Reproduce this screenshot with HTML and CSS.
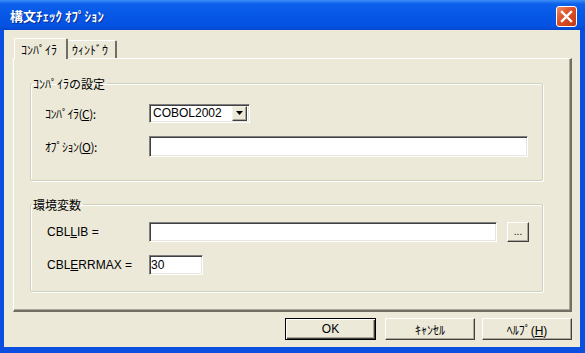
FILE: index.html
```html
<!DOCTYPE html>
<html lang="ja">
  <head>
    <meta charset="UTF-8" />
    <title>構文ﾁｪｯｸ ｵﾌﾟｼｮﾝ</title>
    <link rel="stylesheet" href="styles.css">
  </head>
  <body>
    <div class="window">
      <div class="titlebar">
        <span class="title">構文ﾁｪｯｸ ｵﾌﾟｼｮﾝ</span>
        <button class="close" aria-label="close">
          <svg width="13" height="13" viewBox="0 0 13 13">
            <path d="M2 2 L11 11 M11 2 L2 11" stroke="#fff" stroke-width="2.4" stroke-linecap="square" />
          </svg>
        </button>
      </div>

      <div class="client">
        <div class="tabs">
          <div class="tab active">ｺﾝﾊﾟｲﾗ</div>
          <div class="tab">ｳｨﾝﾄﾞｳ</div>
        </div>

        <div class="panel">
          <fieldset class="group group-compiler">
            <legend>ｺﾝﾊﾟｲﾗの設定</legend>
            <div class="row">
              <label>ｺﾝﾊﾟｲﾗ(<u>C</u>):</label>
              <div class="combo">
                <span class="combo-text">COBOL2002</span>
                <span class="combo-drop">
                  <svg width="7" height="4" viewBox="0 0 7 4"><path d="M0 0 H7 L3.5 4 Z" fill="#000" /></svg>
                </span>
              </div>
            </div>
            <div class="row">
              <label>ｵﾌﾟｼｮﾝ(<u>O</u>):</label>
              <div class="field field-option"></div>
            </div>
          </fieldset>

          <fieldset class="group group-env">
            <legend>環境変数</legend>
            <div class="row">
              <label class="latin">CBL<u>L</u>IB =</label>
              <div class="field field-lib"></div>
              <button class="btn btn-browse">...</button>
            </div>
            <div class="row">
              <label class="latin">CBL<u>E</u>RRMAX =</label>
              <div class="field field-max">30</div>
            </div>
          </fieldset>
        </div>

        <div class="buttons">
          <button class="btn btn-default">OK</button>
          <button class="btn">ｷｬﾝｾﾙ</button>
          <button class="btn">ﾍﾙﾌﾟ(<u>H</u>)</button>
        </div>
      </div>
    </div>
  </body>
</html>
```

FILE: styles.css
```css
* {
  box-sizing: border-box;
  margin: 0;
  padding: 0;
}

body {
  font-family: "Liberation Sans", "Noto Sans CJK JP", sans-serif;
  font-size: 12px;
  color: #000;
  background: #fff;
}

.window {
  width: 585px;
  height: 353px;
  display: flex;
  flex-direction: column;
  background: #0a4fe0;
  padding: 0 5px 6px 4px;
}

/* Title bar */
.titlebar {
  height: 30px;
  margin: 0 -5px 0 -4px;
  padding: 0 8px 0 10px;
  display: flex;
  align-items: center;
  justify-content: space-between;
  background: linear-gradient(
    #3d8ef6 0,
    #0b60ec 4px,
    #0757e6 16px,
    #0452e2 26px,
    #0347cf 30px
  );
}

.title {
  color: #fff;
  font-weight: bold;
  font-size: 13px;
  font-family: "Noto Sans CJK JP", sans-serif;
  text-shadow: 1px 1px 0 #0a2a8a;
}

.close {
  width: 21px;
  height: 21px;
  margin-top: 2px;
  border: 1px solid #fff;
  border-radius: 3px;
  background: linear-gradient(135deg, #ef8a62, #dc4f25 45%, #c23b16);
  display: flex;
  align-items: center;
  justify-content: center;
}

/* Client area */
.client {
  flex: 1;
  background: #ece9d8;
  padding: 8px 8px 0 9px;
  display: flex;
  flex-direction: column;
}

.tabs {
  display: flex;
  align-items: flex-end;
  height: 20px;
  padding-left: 1px;
}

.tab {
  height: 18px;
  padding: 0 4px;
  line-height: 17px;
  font-family: "Noto Sans CJK JP", sans-serif;
  border: 1px solid #fff;
  border-right: 2px solid #716f64;
  border-bottom: none;
  border-radius: 2px 2px 0 0;
  background: #ece9d8;
}

.tab.active {
  height: 21px;
  width: 54px;
  padding: 2px 6px 0 6px;
  margin-bottom: -1px;
  position: relative;
  z-index: 1;
  border-right: 2px solid #716f64;
}

.tab + .tab {
  width: 49px;
  border-left: none;
}

.panel {
  height: 254px;
  border: 1px solid #fff;
  border-right: 2px solid #716f64;
  border-bottom: 2px solid #716f64;
  box-shadow: inset -1px -1px 0 #aca899;
  padding: 18px 27px 0 16px;
}

/* Group boxes */
.group {
  border: 1px solid #d0d0bf;
  box-shadow: inset 1px 1px 0 #fff, 1px 1px 0 #fff;
  border-radius: 2px;
  padding: 13px 0 0 14px;
}

.group legend {
  margin-left: -13px;
  padding: 0 2px 0 1px;
  line-height: 13px;
  font-family: "Noto Sans CJK JP", sans-serif;
}

.group-compiler {
  height: 104px;
}

.group-env {
  margin-top: 17px;
  height: 94px;
  padding-top: 11px;
  padding-left: 16px;
}

.group-env legend {
  margin-left: -15px;
}

.row {
  display: flex;
  align-items: center;
  height: 20px;
  margin-top: 13px;
}

.row:first-of-type {
  margin-top: 0;
}

.group-env .row + .row {
  margin-top: 13px;
}

.row label {
  width: 104px;
  font-family: "Noto Sans CJK JP", sans-serif;
  letter-spacing: -0.5px;
}

.row label.latin {
  width: 102px;
  font-family: "Liberation Sans", sans-serif;
  letter-spacing: 0;
}

/* Fields */
.field,
.combo {
  height: 20px;
  background: #fff;
  border: 1px solid;
  border-color: #7f7f7f #fff #fff #7f7f7f;
  box-shadow: inset 1px 1px 0 #404040, inset -1px -1px 0 #e8e6dc;
  padding: 2px 3px;
  line-height: 15px;
}

.combo {
  width: 101px;
  height: 19px;
  display: flex;
  align-items: center;
  justify-content: space-between;
  padding: 2px 2px 2px 3px;
}

.combo-text {
  font-size: 12px;
}

.combo-drop {
  width: 15px;
  height: 15px;
  background: #ece9d8;
  border: 1px solid;
  border-color: #f4f3ee #404040 #404040 #f4f3ee;
  box-shadow: inset -1px -1px 0 #aca899;
  display: flex;
  align-items: center;
  justify-content: center;
}

.field-option {
  width: 379px;
  height: 21px;
}

.field-lib {
  width: 348px;
}

.field-max {
  width: 54px;
  padding-left: 1px;
}

/* Buttons */
.btn {
  font-family: "Liberation Sans", "Noto Sans CJK JP", sans-serif;
  font-size: 12px;
  color: #000;
  background: #ece9d8;
  border: 1px solid;
  border-color: #fff #404040 #404040 #fff;
  box-shadow: inset -1px -1px 0 #aca899;
  width: 90px;
  height: 22px;
}

.btn-browse {
  width: 22px;
  height: 20px;
  margin-left: 10px;
  font-size: 10px;
  line-height: 12px;
}

.btn-default {
  border: 1px solid #000;
  box-shadow: inset 1px 1px 0 #fff, inset -1px -1px 0 #404040, inset -2px -2px 0 #aca899;
  width: 91px;
}

.buttons {
  display: flex;
  justify-content: flex-end;
  gap: 9px;
  padding-top: 6px;
}

.buttons .btn:last-child {
  margin-left: -2px;
}
```
